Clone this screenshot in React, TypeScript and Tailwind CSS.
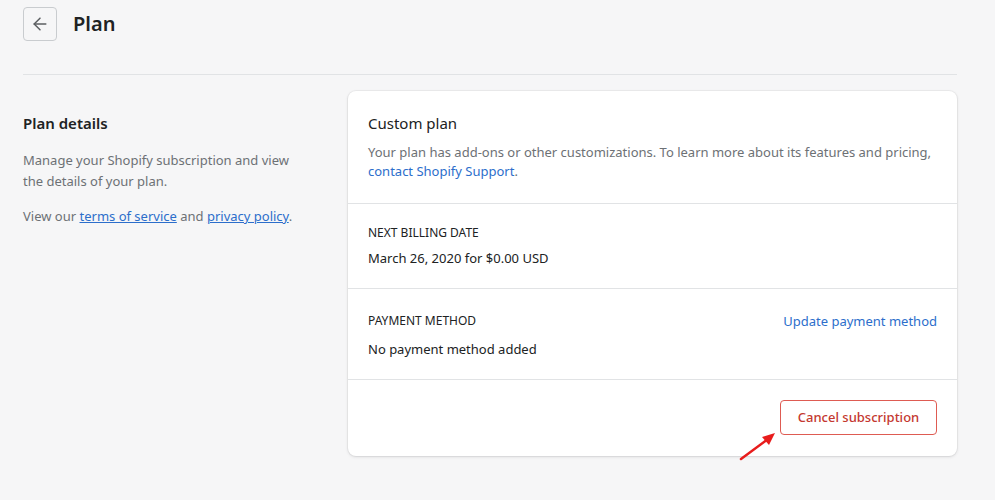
import { ArrowLeft } from 'lucide-react'

export default function App() {
  return (
    <div className="min-h-[500px] bg-[#f6f6f7] text-[#202223]" style={{ fontFamily: '"Segoe UI", "Noto Sans", sans-serif' }}>
      <div className="mx-[23px] w-[934px]">
        {/* Header */}
        <div className="flex items-center gap-[16px] pt-[7px] pb-[33px] border-b border-[#e1e3e5]">
          <button className="flex h-[34px] w-[34px] items-center justify-center rounded-[4px] border border-[#c9cccf] bg-[#f6f6f7] text-[#5c5f62]">
            <ArrowLeft className="h-[20px] w-[20px]" strokeWidth={1.8} />
          </button>
          <h1 className="text-[20px] font-semibold leading-[28px]">Plan</h1>
        </div>

        <div className="flex pt-[16px]">
          {/* Left column */}
          <div className="w-[325px] pt-[22px] pr-[20px]">
            <h2 className="text-[15px] font-semibold leading-[20px]">Plan details</h2>
            <p className="mt-[17px] w-[285px] text-[13px] leading-[21px] text-[#6d7175]">
              Manage your Shopify subscription and view the details of your plan.
            </p>
            <p className="mt-[14px] text-[13px] leading-[21px] text-[#6d7175]">
              View our{' '}
              <a className="text-[#2c6ecb] underline">terms of service</a> and{' '}
              <a className="text-[#2c6ecb] underline">privacy policy</a>.
            </p>
          </div>

          {/* Card */}
          <div className="relative flex-1 rounded-[8px] bg-white shadow-[0_0_0_1px_rgba(63,63,68,0.05),0_1px_3px_0_rgba(63,63,68,0.15)]">
            <div className="border-b border-[#e1e3e5] px-[20px] pt-[21px] pb-[22px]">
              <h3 className="text-[15px] font-normal leading-[22px]">Custom plan</h3>
              <p className="mt-[9px] text-[13px] leading-[19px] text-[#6d7175]">
                Your plan has add-ons or other customizations. To learn more about its features and pricing,{' '}
                <a className="text-[#2c6ecb]">contact Shopify Support</a>.
              </p>
            </div>
            <div className="border-b border-[#e1e3e5] px-[20px] pt-[21px] pb-[20px]">
              <div className="text-[12px] uppercase leading-[16px]">Next billing date</div>
              <div className="mt-[7px] text-[13px] leading-[20px]">March 26, 2020 for $0.00 USD</div>
            </div>
            <div className="border-b border-[#e1e3e5] px-[20px] pt-[23px] pb-[20px]">
              <div className="flex items-center justify-between">
                <div className="text-[12px] uppercase leading-[18px]">Payment method</div>
                <a className="text-[13px] leading-[18px] text-[#2c6ecb]">Update payment method</a>
              </div>
              <div className="mt-[9px] text-[13px] leading-[20px]">No payment method added</div>
            </div>
            <div className="flex justify-end px-[20px] pt-[20px] pb-[21px]">
              <button className="h-[35px] w-[157px] rounded-[4px] border border-[#de5b52] bg-white text-[13px] font-medium text-[#c4382f]">
                Cancel subscription
              </button>
            </div>
            {/* annotation arrow */}
            <svg className="absolute left-[390px] top-[338px]" width="40" height="34" viewBox="0 0 40 34">
              <line x1="3" y1="30" x2="30" y2="10" stroke="#e81c1c" strokeWidth="2.5" strokeLinecap="round" />
              <polygon points="37,4 24,8 31,16" fill="#e81c1c" />
            </svg>
          </div>
        </div>
      </div>
    </div>
  )
}
